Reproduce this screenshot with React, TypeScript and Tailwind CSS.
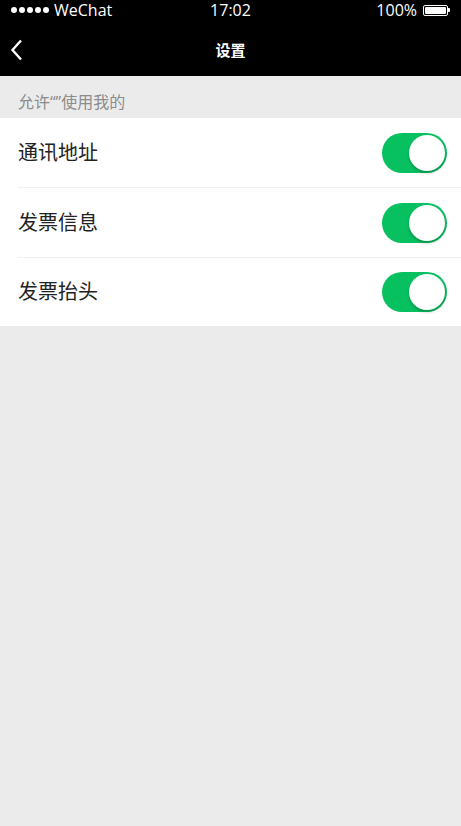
import React, { useState } from "react";

const rows = [
  { id: "address", title: "通讯地址" },
  { id: "invoice", title: "发票信息" },
  { id: "header", title: "发票抬头" },
];

const Toggle = ({ on, onClick }: { on: boolean; onClick: () => void }) => (
  <button
    type="button"
    onClick={onClick}
    className={`relative w-[65px] h-[40px] rounded-full transition-colors ${
      on ? "bg-[#07c160]" : "bg-[#e5e5e5]"
    }`}
  >
    <span
      className={`absolute top-[2px] w-[36px] h-[36px] rounded-full bg-white shadow-[0_2px_3px_rgba(0,0,0,0.25)] transition-all ${
        on ? "left-[27px]" : "left-[2px]"
      }`}
    />
  </button>
);

export default function App() {
  const [state, setState] = useState<Record<string, boolean>>({
    address: true,
    invoice: true,
    header: true,
  });

  return (
    <div
      className="min-h-[826px] w-full bg-[#ebebeb]"
      style={{ fontFamily: '"Open Sans", "Noto Sans CJK SC", sans-serif' }}
    >
      {/* status bar */}
      <div className="relative h-[20px] bg-black text-white flex items-center justify-between px-[11px] text-[16px] leading-none">
        <div className="flex items-center gap-[5px]">
          <span className="flex gap-[2px]">
            {[0, 1, 2, 3, 4].map((i) => (
              <span key={i} className="w-[6px] h-[6px] rounded-full bg-white" />
            ))}
          </span>
          <span>WeChat</span>
        </div>
        <span className="absolute left-1/2 -translate-x-1/2">17:02</span>
        <div className="flex items-center gap-[6px]">
          <span>100%</span>
          <span className="flex items-center">
            <span className="w-[25px] h-[11px] border border-white rounded-[2px] p-[1px]">
              <span className="block w-full h-full bg-white rounded-[1px]" />
            </span>
            <span className="w-[2px] h-[4px] bg-white rounded-r-[1px]" />
          </span>
        </div>
      </div>

      {/* nav bar */}
      <div className="relative h-[56px] bg-black text-white flex items-center justify-center pt-[4px]">
        <button type="button" className="absolute left-[10px] top-[19px]">
          <svg width="14" height="22" viewBox="0 0 14 22" fill="none">
            <path d="M11 1.5 L2.5 11 L11 20.5" stroke="white" strokeWidth="2.4" />
          </svg>
        </button>
        <span className="text-[15px] font-bold">设置</span>
      </div>

      {/* section header */}
      <div className="h-[42px] px-[18px] flex items-end pb-[4px] text-[16px] text-[#8c8c8c]">
        允许“”使用我的
      </div>

      {/* rows */}
      <div className="bg-white">
        {rows.map((row, i) => (
          <div key={row.id} className="pl-[18px]">
            <div
              className={`pr-[14px] flex items-center justify-between ${
                i < rows.length - 1 ? "h-[70px] border-b border-[#f0f0f0]" : "h-[68px]"
              }`}
            >
              <span className="text-[20px] text-[#222]">{row.title}</span>
              <Toggle
                on={state[row.id]}
                onClick={() => setState({ ...state, [row.id]: !state[row.id] })}
              />
            </div>
          </div>
        ))}
      </div>
    </div>
  );
}
